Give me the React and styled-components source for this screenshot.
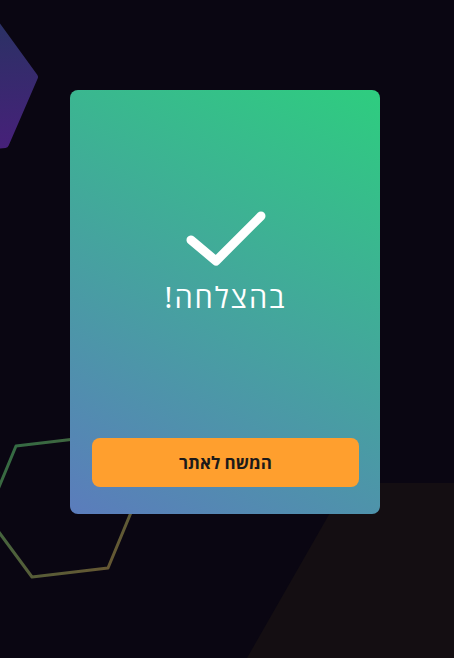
import React from 'react';
import styled, { createGlobalStyle } from 'styled-components';

const GlobalStyle = createGlobalStyle`
  html, body {
    margin: 0;
    padding: 0;
    background: #0a0612;
  }
  * {
    box-sizing: border-box;
  }
`;

const Backdrop = () => (
  <BackdropSvg viewBox="0 0 454 658" preserveAspectRatio="none">
    <defs>
      <linearGradient id="purpleHex" x1="0" y1="0" x2="0" y2="1">
        <stop offset="0" stopColor="#2a3264" />
        <stop offset="1" stopColor="#47207a" />
      </linearGradient>
      <linearGradient id="lineHex" x1="0" y1="0" x2="1" y2="1">
        <stop offset="0" stopColor="#2c6e46" />
        <stop offset="1" stopColor="#6e5430" />
      </linearGradient>
    </defs>
    <polygon
      points="34,77 5,144 -68,152 -111,93 -82,26 -9,18"
      fill="url(#purpleHex)"
      stroke="url(#purpleHex)"
      strokeWidth="8"
      strokeLinejoin="round"
    />
    <polygon
      points="137,498 108,568 32,577 -13,516 16,446 92,437"
      fill="none"
      stroke="url(#lineHex)"
      strokeWidth="3"
      strokeLinejoin="round"
    />
    <polygon points="347,483 454,483 454,658 247,658" fill="#140e12" />
  </BackdropSvg>
);

const CheckIcon = () => (
  <svg width="90" height="62" viewBox="0 0 90 62">
    <polyline
      points="10,31 35,52 80,7"
      fill="none"
      stroke="#ffffff"
      strokeWidth="9"
      strokeLinecap="round"
      strokeLinejoin="round"
    />
  </svg>
);

const App = () => {
  return (
    <>
      <GlobalStyle />
      <Page>
        <Backdrop />
        <Card>
          <Message>
            <CheckIcon />
            <Title>בהצלחה!</Title>
          </Message>
          <ContinueButton>המשח לאתר</ContinueButton>
        </Card>
      </Page>
    </>
  );
};

export default App;

const Page = styled.div`
  position: relative;
  width: 454px;
  height: 658px;
  overflow: hidden;
  padding: 90px 0 0 70px;
  font-family: 'Noto Sans', 'Open Sans', sans-serif;
`;

const BackdropSvg = styled.svg`
  position: absolute;
  inset: 0;
  width: 100%;
  height: 100%;
`;

const Card = styled.div`
  position: relative;
  width: 310px;
  height: 424px;
  border-radius: 8px;
  background: linear-gradient(28deg, #5b7cbc 0%, #2ecd7f 100%);
  display: flex;
  flex-direction: column;
  padding: 0 21px 27px 22px;
`;

const Message = styled.div`
  flex: 1;
  display: flex;
  flex-direction: column;
  align-items: center;
  padding-top: 119px;
`;

const Title = styled.div`
  direction: rtl;
  margin-top: 9px;
  color: #ffffff;
  font-size: 29px;
  font-weight: 400;
  letter-spacing: 2px;
  line-height: 34px;
`;

const ContinueButton = styled.button`
  direction: rtl;
  height: 49px;
  width: 100%;
  border: none;
  border-radius: 8px;
  background: #ff9f2e;
  color: #1c1a1a;
  font-family: 'Noto Sans', 'Open Sans', sans-serif;
  font-size: 17px;
  font-weight: 700;
  cursor: pointer;
`;
